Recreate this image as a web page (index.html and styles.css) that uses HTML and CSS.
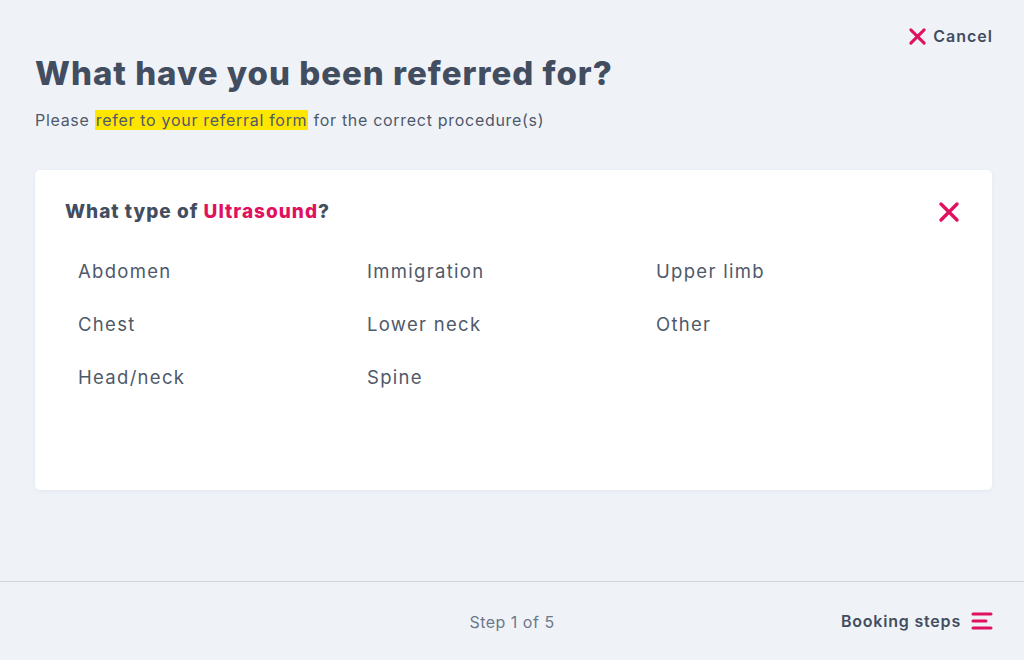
FILE: index.html
```html
<!DOCTYPE html>
<html lang="en">
<head>
<meta charset="utf-8">
<title>What have you been referred for?</title>
<link rel="stylesheet" href="styles.css">
</head>
<body>
<div class="page">
  <main class="main">
    <div class="topbar">
      <a class="cancel" href="#">
        <svg class="cancel-icon" viewBox="0 0 20 20" width="19" height="19"><path d="M3 3L17 17M17 3L3 17" stroke="#e0115f" stroke-width="3.2" stroke-linecap="round"/></svg>
        <span>Cancel</span>
      </a>
    </div>
    <h1 class="title">What have you been referred for?</h1>
    <p class="subtitle">Please <mark class="hl">refer to your referral form</mark> for the correct procedure(s)</p>

    <section class="card">
      <div class="card-head">
        <h2 class="card-title">What type of <span class="accent">Ultrasound</span>?</h2>
        <button class="close" aria-label="Close">
          <svg viewBox="0 0 22 22" width="22" height="22"><path d="M3 3L19 19M19 3L3 19" stroke="#e0115f" stroke-width="3.4" stroke-linecap="round"/></svg>
        </button>
      </div>
      <ul class="options">
        <li>Abdomen</li>
        <li>Immigration</li>
        <li>Upper limb</li>
        <li>Chest</li>
        <li>Lower neck</li>
        <li>Other</li>
        <li>Head/neck</li>
        <li>Spine</li>
      </ul>
    </section>
  </main>
  <footer class="footer">
    <div class="step">Step 1 of 5</div>
    <a class="steps-link" href="#">
      <span>Booking steps</span>
      <svg viewBox="0 0 22 18" width="22" height="18"><path d="M2 2H20M2 9H15M2 16H20" stroke="#e0115f" stroke-width="3" stroke-linecap="round"/></svg>
    </a>
  </footer>
</div>
</body>
</html>
```

FILE: styles.css
```css
* { box-sizing: border-box; }
html, body { margin: 0; padding: 0; }
body {
  background: #eff3f8;
  font-family: Inter, "Noto Sans", "Liberation Sans", sans-serif;
  color: #434d5f;
  width: 1024px;
  height: 660px;
  overflow: hidden;
}
.page {
  height: 660px;
  display: flex;
  flex-direction: column;
}
.main {
  flex: 1;
  padding: 25px 31px 0 35px;
}
.topbar {
  display: flex;
  justify-content: flex-end;
}
.cancel {
  display: flex;
  align-items: center;
  gap: 6px;
  text-decoration: none;
  color: #434d5f;
  font-size: 16px;
  font-weight: 600;
  height: 22px;
  letter-spacing: 1px;
}
.title {
  margin: 4px 0 0;
  font-size: 33px;
  font-weight: 800;
  letter-spacing: 1px;
  line-height: 44px;
  color: #434d60;
}
.subtitle {
  margin: 14px 0 0;
  font-size: 16px;
  line-height: 22px;
  letter-spacing: 0.7px;
  color: #4f596a;
}
.hl {
  background: #ffe600;
  color: #4f596a;
  padding: 0 1px;
}
.card {
  margin-top: 39px;
  width: 957px;
  height: 320px;
  background: #fff;
  border-radius: 5px;
  box-shadow: 0 1px 4px rgba(30, 50, 80, 0.06);
  padding: 29px 32px 0 30px;
}
.card-head {
  display: flex;
  justify-content: space-between;
  align-items: center;
}
.card-title {
  margin: 0;
  font-size: 19px;
  font-weight: 800;
  line-height: 26px;
  letter-spacing: 1px;
  color: #434d60;
}
.accent { color: #e0115f; }
.close {
  border: 0;
  background: none;
  padding: 0;
  width: 22px;
  height: 22px;
  display: flex;
}
.options {
  list-style: none;
  margin: 33px 0 0;
  padding: 0 0 0 13px;
  display: grid;
  grid-template-columns: 289px 289px 289px;
  row-gap: 27px;
  font-size: 18.5px;
  line-height: 26px;
  letter-spacing: 1.3px;
  color: #4f596a;
}
.footer {
  height: 79px;
  border-top: 1px solid #cfd6df;
  display: flex;
  align-items: center;
  justify-content: flex-end;
  position: relative;
  padding: 0 31px 0 0;
}
.step {
  position: absolute;
  left: 0;
  right: 0;
  text-align: center;
  font-size: 16px;
  letter-spacing: 0.5px;
  color: #6e788a;
  top: 30px;
}
.steps-link {
  position: relative;
  display: flex;
  align-items: center;
  gap: 10px;
  text-decoration: none;
  color: #434d5f;
  font-size: 16px;
  font-weight: 600;
  letter-spacing: 0.8px;
}
```
